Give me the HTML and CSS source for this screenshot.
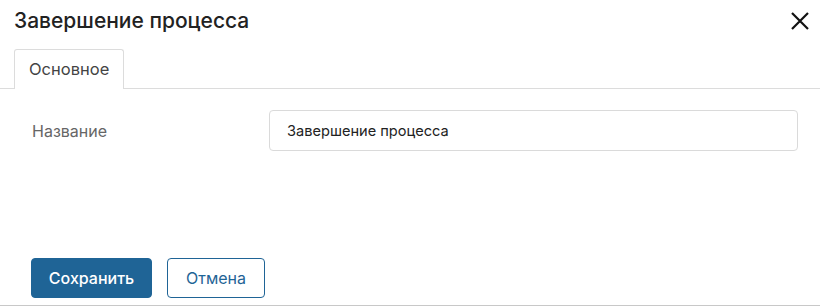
FILE: index.html
```html
<!DOCTYPE html>
<html>
<head>
  <meta charset="utf-8">
  <title>Завершение процесса</title>
  <link rel="stylesheet" href="styles.css">
</head>
<body>
  <div class="dialog">
    <header class="dialog-header">
      <h1>Завершение процесса</h1>
      <button class="close" title="Закрыть">
        <svg width="20" height="20" viewBox="0 0 20 20"><path d="M2 2 L18 18 M18 2 L2 18" stroke="#111" stroke-width="2.2" fill="none"/></svg>
      </button>
    </header>
    <div class="tabs">
      <div class="tab active">Основное</div>
    </div>
    <div class="dialog-body">
      <div class="form-row">
        <label class="form-label" for="name">Название</label>
        <input class="form-input" id="name" type="text" value="Завершение процесса">
      </div>
    </div>
    <footer class="dialog-footer">
      <button class="btn btn-primary">Сохранить</button>
      <button class="btn btn-outline">Отмена</button>
    </footer>
  </div>
</body>
</html>
```

FILE: styles.css
```css
body {
  margin: 0;
  padding: 0;
  font-family: Inter, "Liberation Sans", sans-serif;
  background: #fff;
  color: #222;
}
.dialog {
  display: flex;
  flex-direction: column;
  height: 306px;
  box-sizing: border-box;
  border-bottom: 1px solid #c8c8c8;
}
.dialog-header {
  display: flex;
  justify-content: space-between;
  align-items: center;
  height: 41px;
  padding: 0 10px 0 14px;
}
.dialog-header h1 {
  margin: 0;
  font-size: 21px;
  font-weight: 500;
  color: #222;
}
.close {
  border: none;
  background: none;
  padding: 0;
  width: 20px;
  height: 20px;
  cursor: pointer;
}
.tabs {
  display: flex;
  padding: 8px 0 0 14px;
  border-bottom: 1px solid #dcdcdc;
}
.tab {
  height: 39px;
  line-height: 39px;
  padding: 0 14px;
  font-size: 16.5px;
  color: #444;
  border: 1px solid #dcdcdc;
  border-bottom: none;
  border-radius: 3px 3px 0 0;
  background: #fff;
  margin-bottom: -1px;
  position: relative;
}
.dialog-body {
  flex: 1;
  padding: 21px 22px 0 32px;
}
.form-row {
  display: flex;
  align-items: center;
}
.form-label {
  width: 237px;
  font-size: 16px;
  color: #666;
}
.form-input {
  flex: 1;
  height: 41px;
  box-sizing: border-box;
  border: 1px solid #dadada;
  border-radius: 4px;
  padding: 0 17px;
  font-family: inherit;
  font-size: 14.6px;
  color: #222;
  outline: none;
}
.dialog-footer {
  display: flex;
  gap: 15px;
  padding: 0 0 7px 31px;
}
.btn {
  height: 40px;
  box-sizing: border-box;
  border-radius: 4px;
  font-family: inherit;
  font-size: 16px;
  cursor: pointer;
}
.btn-primary {
  width: 121px;
  background: #1f6496;
  border: 1px solid #1f6496;
  color: #fff;
  font-weight: 500;
}
.btn-outline {
  width: 98px;
  background: #fff;
  border: 1px solid #1f6496;
  color: #1f6496;
}
```
